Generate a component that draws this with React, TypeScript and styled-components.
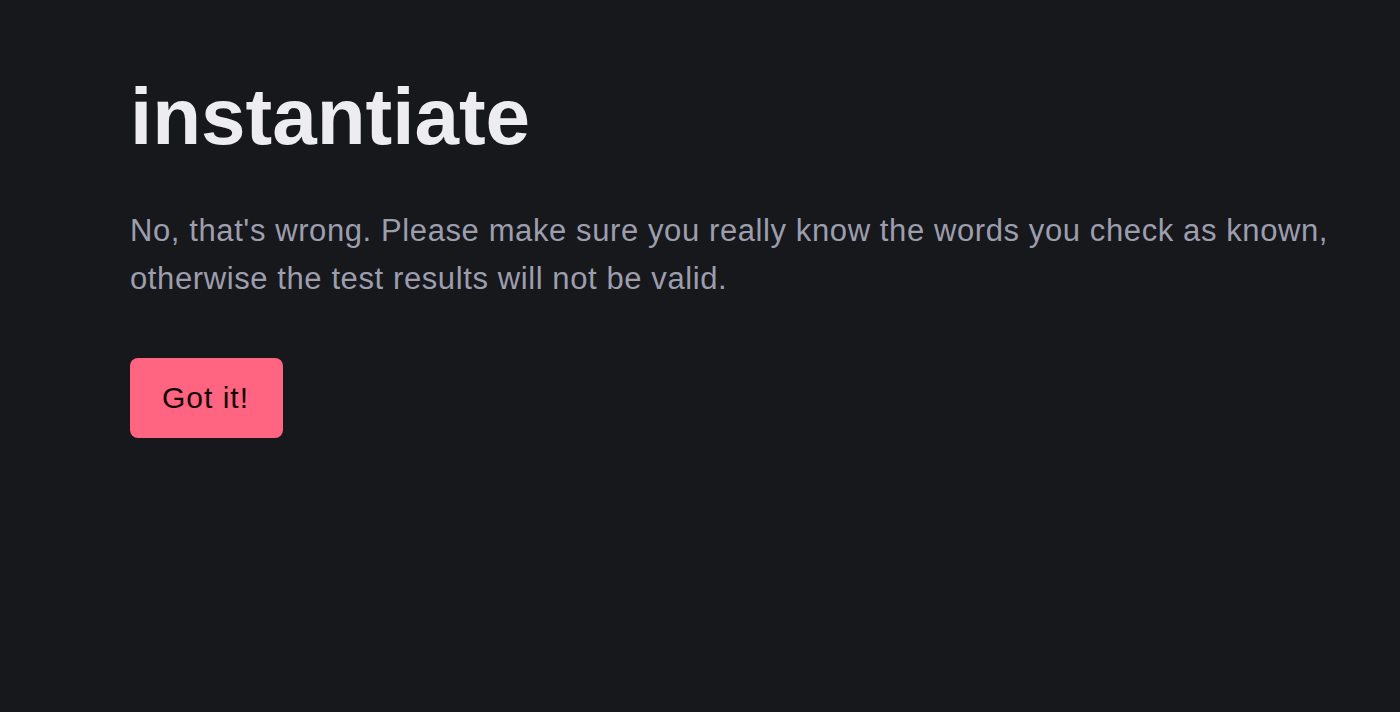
import styled, { createGlobalStyle } from 'styled-components';

const GlobalStyle = createGlobalStyle`
  html, body {
    margin: 0;
    padding: 0;
    background: #17181c;
  }
  body {
    font-family: "Liberation Sans", Arial, Helvetica, sans-serif;
    -webkit-font-smoothing: antialiased;
  }
`;

const Page = styled.main`
  min-height: 712px;
  box-sizing: border-box;
  padding: 62px 40px 0 130px;
  background: #17181c;
`;

const Word = styled.h1`
  margin: 0;
  color: #ececf1;
  font-size: 80px;
  font-weight: 700;
  line-height: 110px;
`;

const Message = styled.p`
  margin: 35px 0 0;
  color: #9c9eae;
  font-size: 31px;
  line-height: 48px;
  letter-spacing: 0.6px;
`;

const Button = styled.button`
  margin-top: 55px;
  height: 80px;
  padding: 0 34px 0 32px;
  border: none;
  border-radius: 8px;
  background: #ff6480;
  color: #120608;
  font-family: inherit;
  font-size: 30px;
  letter-spacing: 1px;
  cursor: pointer;
`;

export default function App() {
  return (
    <Page>
      <GlobalStyle />
      <Word>instantiate</Word>
      <Message>
        No, that's wrong. Please make sure you really know the words you check as known,
        otherwise the test results will not be valid.
      </Message>
      <Button>Got it!</Button>
    </Page>
  );
}
